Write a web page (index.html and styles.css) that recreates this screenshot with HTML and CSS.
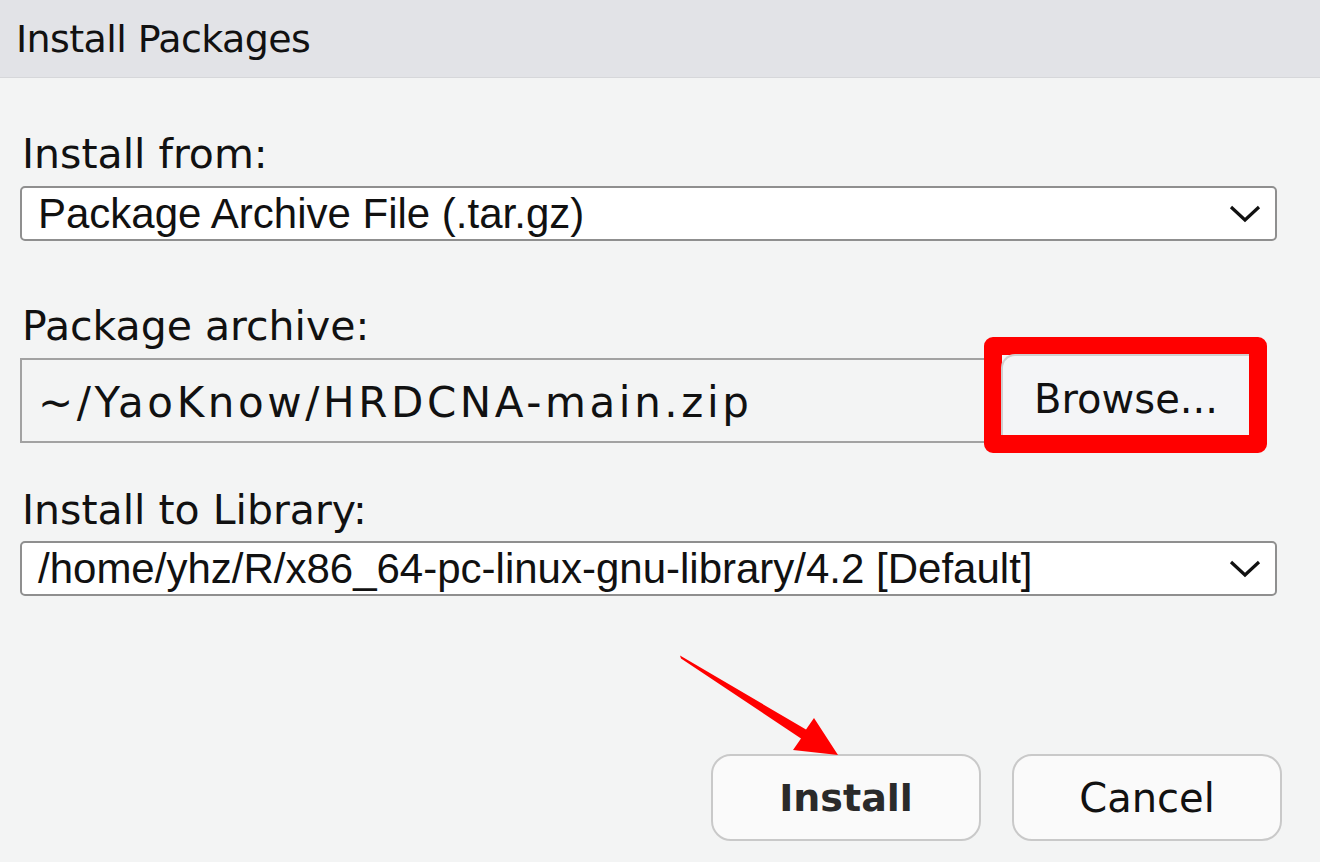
FILE: index.html
```html
<!DOCTYPE html>
<html>
<head>
<meta charset="utf-8">
<title>Install Packages</title>
<link rel="stylesheet" href="styles.css">
</head>
<body>
<div class="dialog">
  <div class="titlebar">Install Packages</div>
  <div class="form">
    <div class="label">Install from:</div>
    <div class="select">
      <span class="select-text">Package Archive File (.tar.gz)</span>
      <svg class="chevron" width="32" height="18" viewBox="0 0 32 18"><polyline points="2,2 16,15 30,2" fill="none" stroke="#111" stroke-width="3.2"/></svg>
    </div>
    <div class="label label-gap">Package archive:</div>
    <div class="file-row">
      <div class="file-input">~/YaoKnow/HRDCNA-main.zip</div>
      <div class="browse-mark">
        <div class="browse-btn">Browse...</div>
      </div>
    </div>
    <div class="label label-gap2">Install to Library:</div>
    <div class="select">
      <span class="select-text">/home/yhz/R/x86_64-pc-linux-gnu-library/4.2 [Default]</span>
      <svg class="chevron" width="32" height="18" viewBox="0 0 32 18"><polyline points="2,2 16,15 30,2" fill="none" stroke="#111" stroke-width="3.2"/></svg>
    </div>
  </div>
  <div class="footer">
    <div class="btn btn-primary">Install</div>
    <div class="btn">Cancel</div>
  </div>
  <svg class="arrow" width="1320" height="862" viewBox="0 0 1320 862">
    <polygon points="680,655.5 806,729.5 814,718 838,755 793,750 801,738.5 681,658.5" fill="#ff0000"/>
  </svg>
</div>
</body>
</html>
```

FILE: styles.css
```css
html, body {
  margin: 0;
  padding: 0;
}
body {
  background: #f3f4f4;
  font-family: "DejaVu Sans", "Open Sans", sans-serif;
  color: #111;
  width: 1320px;
  height: 862px;
  overflow: hidden;
}
.dialog {
  position: relative;
  width: 1320px;
  height: 862px;
}
.titlebar {
  height: 77px;
  border-bottom: 1px solid #d6d7da;
  background: #e2e3e7;
  display: flex;
  align-items: center;
  padding-left: 16px;
  font-size: 38px;
  letter-spacing: -0.6px;
  color: #111;
}
.form {
  padding: 52px 43px 0 20px;
  display: flex;
  flex-direction: column;
}
.label {
  font-size: 41px;
  line-height: 48px;
  padding-left: 2px;
  margin-bottom: 8px;
}
.label-gap {
  margin-top: 61px;
  margin-bottom: 8px;
}
.label-gap2 {
  margin-top: 42px;
  margin-bottom: 7px;
}
.select {
  height: 51px;
  border: 2px solid #8f8f8f;
  border-radius: 5px;
  background: #fff;
  display: flex;
  align-items: center;
  justify-content: space-between;
  padding: 0 14px 0 16px;
}
.select-text {
  font-family: "Liberation Sans", Arial, sans-serif;
  font-size: 42px;
  color: #111;
}
.chevron {
  display: block;
}
.file-row {
  display: flex;
  align-items: flex-start;
  margin-right: 10px;
}
.file-input {
  flex: 1;
  height: 81px;
  border: 2px solid #a2a2a2;
  border-right: none;
  background: #f3f4f4;
  display: flex;
  align-items: center;
  padding: 3px 0 0 16px;
  box-sizing: content-box;
  height: 78px;
  font-size: 42px;
  letter-spacing: 3.6px;
  color: #111;
}
.browse-mark {
  position: relative;
  width: 247px;
  height: 80px;
  margin-top: -21px;
  margin-bottom: -9px;
  border: 18px solid #ff0000;
  border-radius: 9px;
  background: #f4f5f7;
  display: flex;
}
.browse-btn {
  flex: 1;
  display: flex;
  align-items: center;
  justify-content: center;
  padding-top: 6px;
  font-size: 40px;
  color: #111;
  border-top: 2px solid #cfcfcf;
  border-left: 2px solid #cfcfcf;
  border-radius: 14px 0 0 0;
  margin-top: -1px;
  margin-left: -1px;
}
.footer {
  display: flex;
  justify-content: flex-end;
  gap: 31px;
  padding: 158px 38px 0 0;
}
.btn {
  width: 266px;
  height: 83px;
  border: 2px solid #c9c9c9;
  border-radius: 20px;
  background: #fafafa;
  display: flex;
  align-items: center;
  justify-content: center;
  font-size: 40px;
  color: #111;
}
.btn-primary {
  font-weight: bold;
  font-size: 38px;
  color: #2a2a2a;
}
.arrow {
  position: absolute;
  left: 0;
  top: 0;
  pointer-events: none;
}
```
